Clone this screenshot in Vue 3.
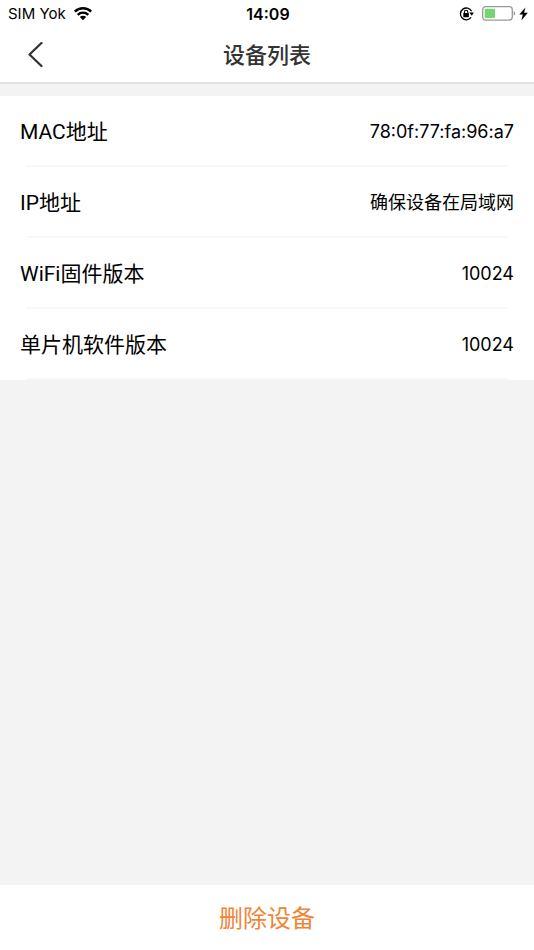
<script setup>
const rows = [
  { label: 'MAC地址', value: '78:0f:77:fa:96:a7' },
  { label: 'IP地址', value: '确保设备在局域网' },
  { label: 'WiFi固件版本', value: '10024' },
  { label: '单片机软件版本', value: '10024' },
]
</script>

<template>
  <div class="page">
    <div class="status">
      <div class="carrier">
        <span>SIM Yok</span>
        <svg width="18" height="14" viewBox="0 0 18 14" aria-hidden="true">
          <g fill="none" stroke="#000" stroke-width="2.4">
            <path d="M.8 4.6a11.7 11.7 0 0 1 16.4 0" />
            <path d="M3.7 7.8a7.6 7.6 0 0 1 10.6 0" />
          </g>
          <path d="M5.8 10.1a4.6 4.6 0 0 1 6.4 0L9 13.2z" />
        </svg>
      </div>
      <span class="time">14:09</span>
      <div class="indicators">
        <svg width="15" height="14" viewBox="0 0 15 14" aria-hidden="true">
          <path d="M12.6 4.2A5.9 5.9 0 1 0 12.1 10.4" fill="none" stroke="#000" stroke-width="1.3" />
          <path d="M10.3 5.6h4.6l-2.1 3.2z" />
          <rect x="4.3" y="6" width="5.6" height="4.2" rx=".6" />
          <path d="M5.4 6.3V4.9a1.7 1.7 0 0 1 3.4 0v1.4" fill="none" stroke="#000" stroke-width="1.1" />
        </svg>
        <svg class="battery" width="34" height="16" viewBox="0 0 34 16" aria-hidden="true">
          <rect x=".7" y=".7" width="29.6" height="13.4" rx="3" fill="none" stroke="#999" stroke-width="1.3" />
          <rect x="2.7" y="2.7" width="10.3" height="9.4" rx="1" fill="#76d572" />
          <path d="M31.7 5c2 .9 2 3.9 0 4.8z" fill="#999" />
        </svg>
        <svg width="9" height="14" viewBox="0 0 9 14" aria-hidden="true">
          <path d="M6.4.4.3 7.6h3.5L2.4 13.4 8.8 5.8H5.1z" />
        </svg>
      </div>
    </div>

    <header class="nav">
      <button class="back" type="button" aria-label="返回">
        <svg width="16" height="26" viewBox="0 0 16 26" aria-hidden="true">
          <path d="M13.5 1 1.5 12.5l12 11.5" fill="none" stroke="#333" stroke-width="2.3" stroke-linecap="round" stroke-linejoin="round" />
        </svg>
      </button>
      <h1>设备列表</h1>
    </header>

    <main>
      <dl class="list">
        <div v-for="row in rows" :key="row.label" class="row">
          <dt>{{ row.label }}</dt>
          <dd>{{ row.value }}</dd>
        </div>
      </dl>
    </main>

    <button class="delete" type="button">删除设备</button>
  </div>
</template>

<style>
body {
  margin: 0;
}
</style>

<style scoped>
.page {
  display: flex;
  flex-direction: column;
  min-height: 100vh;
  background: #f3f3f3;
  color: #000;
  font-family: Inter, "Noto Sans CJK SC", sans-serif;
}

.status {
  display: grid;
  grid-template-columns: 1fr auto 1fr;
  align-items: center;
  height: 28px;
  padding: 0 6px 0 8px;
  background: #fff;
  font-size: 15px;
  line-height: 28px;
}

.carrier,
.indicators {
  display: flex;
  align-items: center;
  gap: 8px;
}

.indicators {
  justify-content: flex-end;
}

.battery {
  margin-right: -5px;
}

.time {
  font-size: 16px;
  font-weight: 600;
}

.nav {
  display: grid;
  grid-template-columns: 72px 1fr 72px;
  align-items: center;
  height: 54px;
  background: #fff;
  border-bottom: 2px solid #e2e2e2;
}

.back {
  display: flex;
  justify-content: center;
  padding: 0;
  border: 0;
  background: none;
}

h1 {
  margin: 0;
  color: #333;
  font-size: 22px;
  font-weight: 500;
  line-height: 32px;
  text-align: center;
}

main {
  flex: 1;
  padding-top: 12px;
}

.list {
  margin: 0;
  background: #fff;
}

.row {
  display: flex;
  align-items: center;
  justify-content: space-between;
  height: 71px;
  box-sizing: border-box;
  padding: 1px 20px 0;
  background: linear-gradient(#f8f8f8, #f8f8f8) center bottom / calc(100% - 52px) 2px no-repeat;
}

dt {
  font-family: Roboto, "Noto Sans CJK SC", sans-serif;
  font-size: 21px;
  line-height: 30px;
}

dd {
  margin: 0;
  font-size: 18px;
  line-height: 30px;
}

.delete {
  height: 65px;
  padding: 0 0 2px;
  border: 0;
  background: #fff;
  color: #f08437;
  font-family: inherit;
  font-size: 24px;
}
</style>
